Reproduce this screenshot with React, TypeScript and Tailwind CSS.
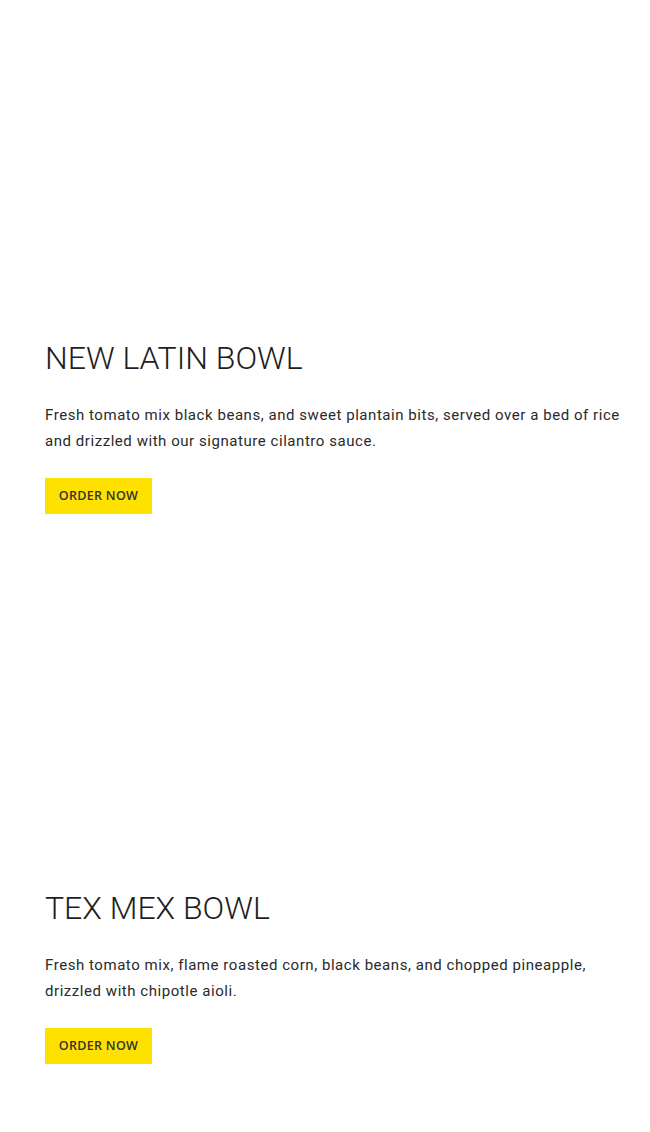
import React from "react";

const items = [
  {
    title: "NEW LATIN BOWL",
    desc: "Fresh tomato mix black beans, and sweet plantain bits, served over a bed of rice and drizzled with our signature cilantro sauce.",
  },
  {
    title: "TEX MEX BOWL",
    desc: "Fresh tomato mix, flame roasted corn, black beans, and chopped pineapple, drizzled with chipotle aioli.",
  },
];

export default function App() {
  return (
    <div className="flex w-[650px] min-h-[1132px] flex-col bg-white font-['Roboto','Noto_Sans',sans-serif]">
      {items.map((it) => (
        <section key={it.title} className="flex h-[550px] flex-col items-start pl-[45px] pr-[20px] pt-[338px]">
          <h2 className="text-[32px] font-light leading-[40px] tracking-[0px] text-[#1e1e1e]">
            {it.title}
          </h2>
          <p className="mt-[24px] text-[15px] leading-[26px] tracking-[0.55px] text-[#2a2a2a]">
            {it.desc}
          </p>
          <button className="mt-[24px] h-[36px] w-[107px] bg-[#ffe100] font-['Open_Sans',sans-serif] text-[12.5px] font-semibold tracking-[0.3px] text-[#333333]">
            ORDER NOW
          </button>
        </section>
      ))}
    </div>
  );
}
